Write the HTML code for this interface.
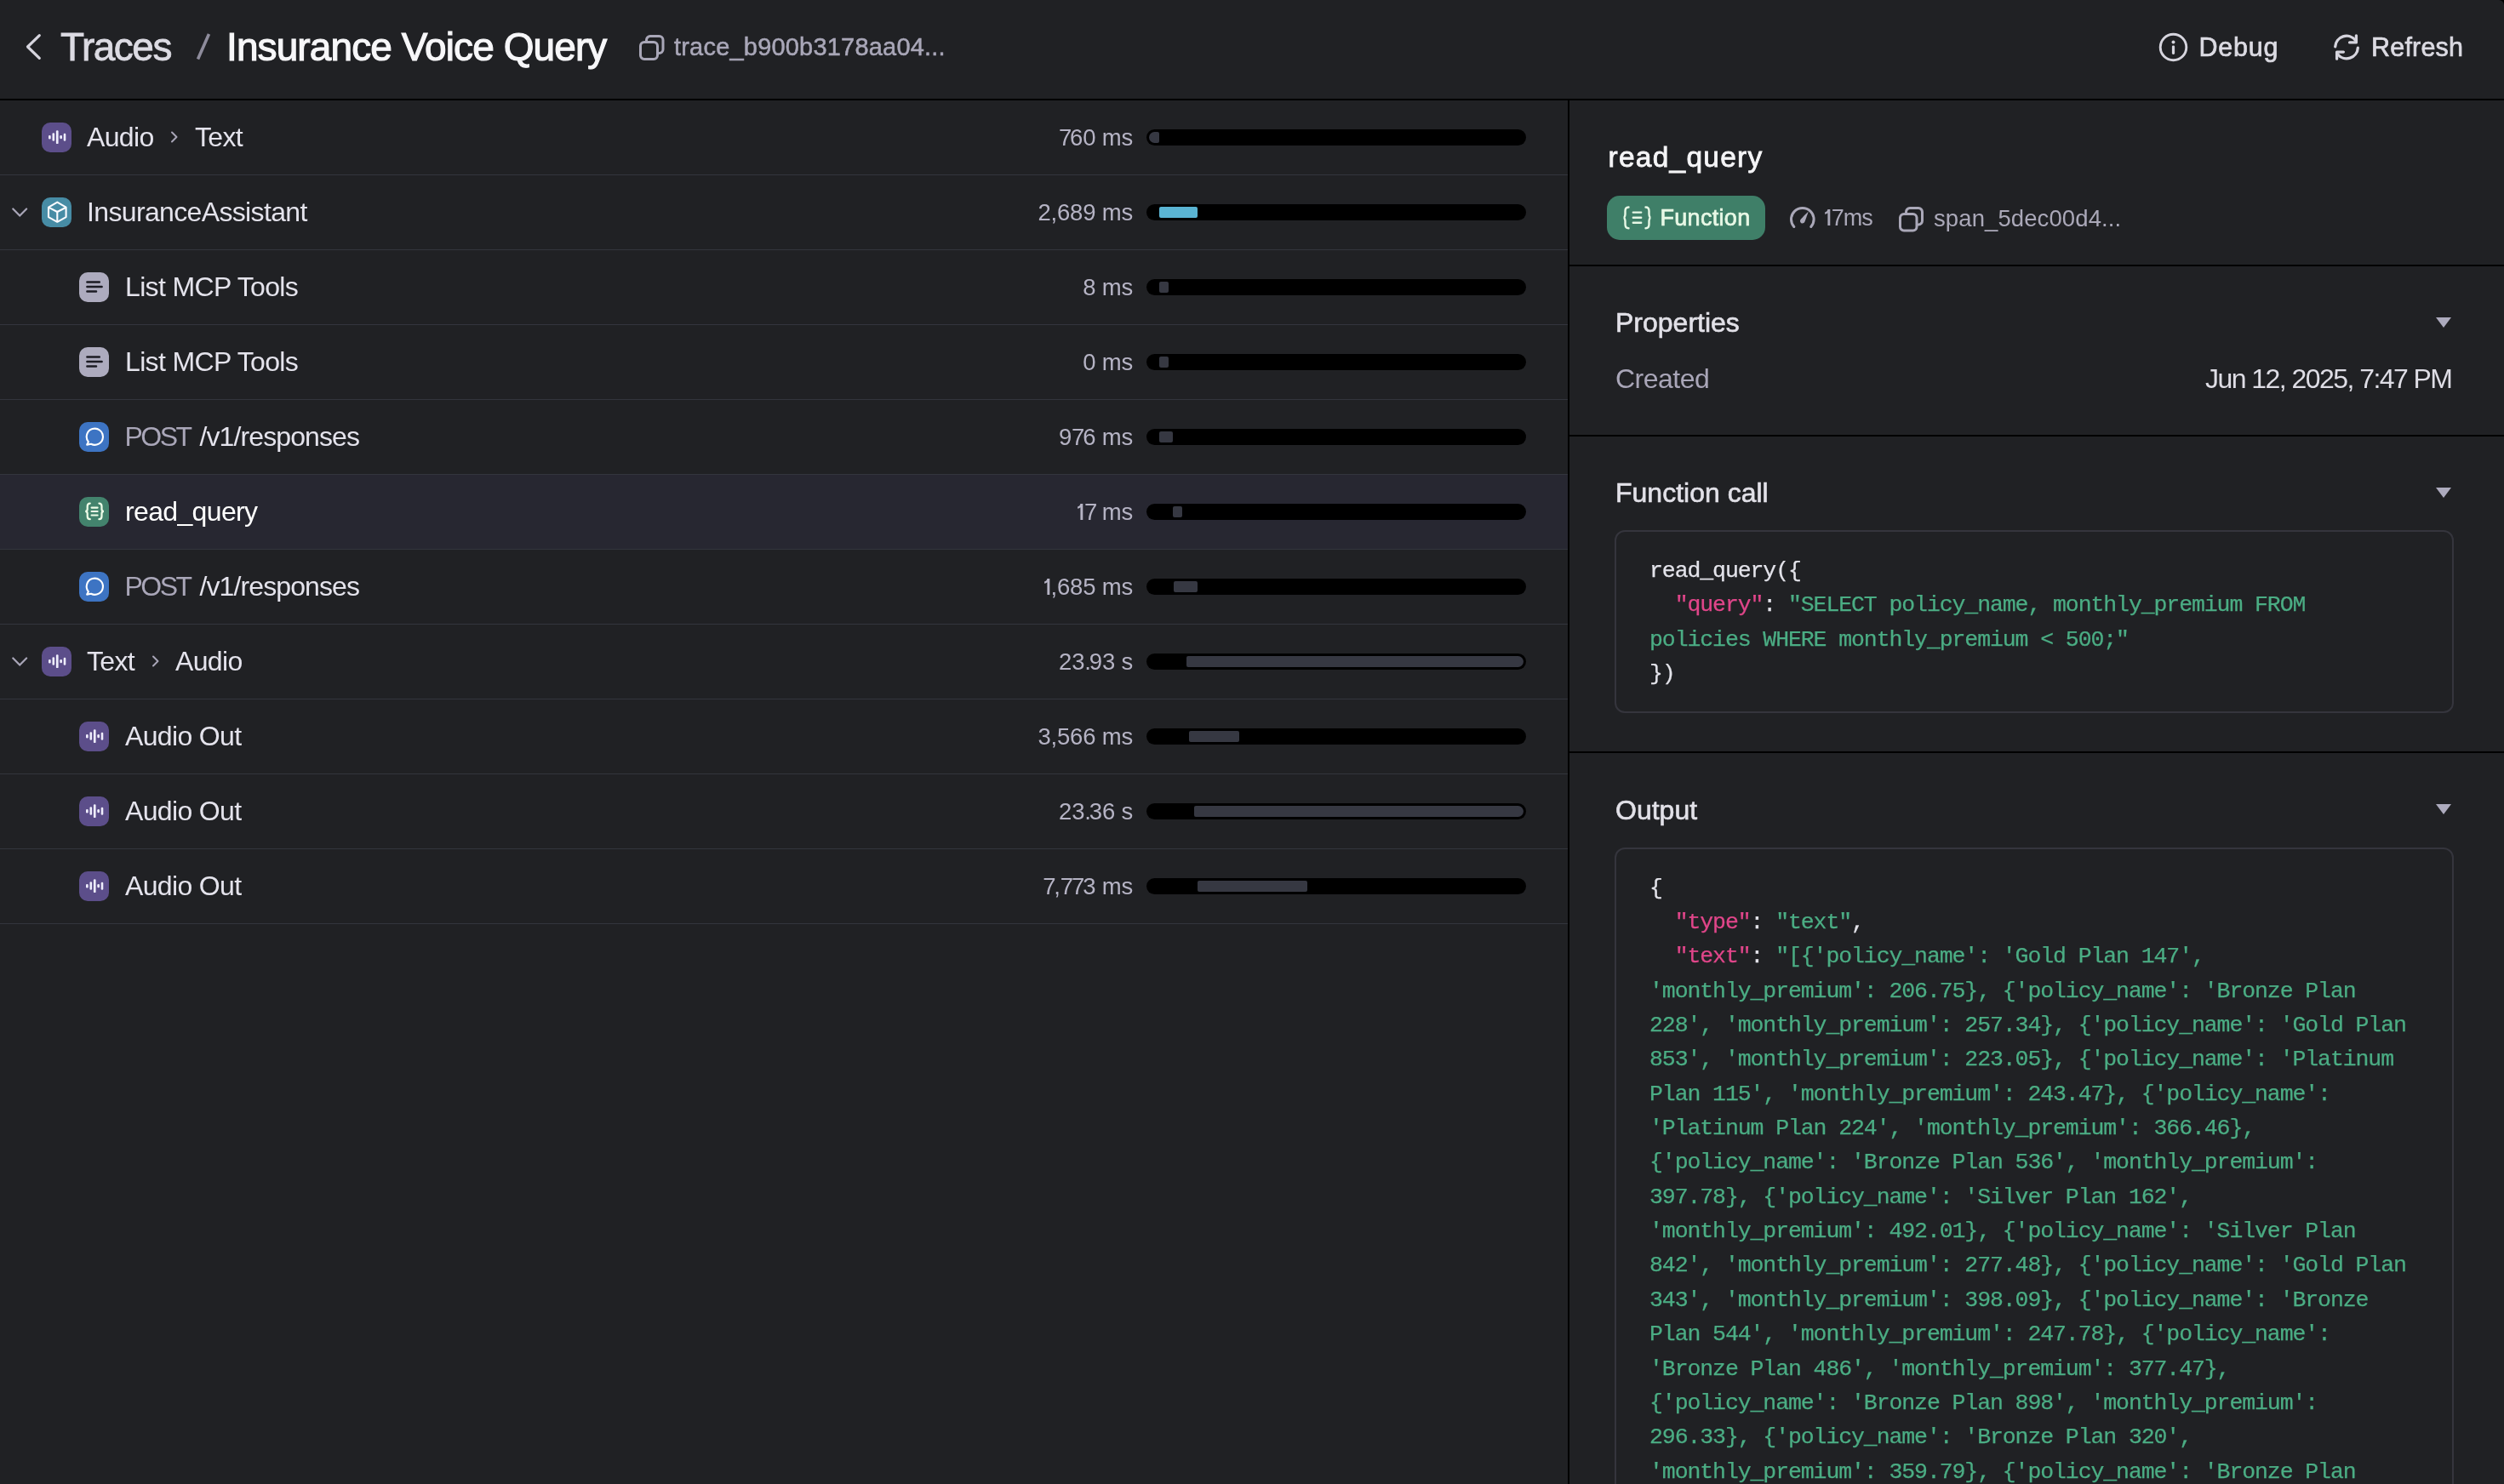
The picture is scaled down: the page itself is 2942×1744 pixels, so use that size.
<!DOCTYPE html>
<html><head><meta charset="utf-8">
<style>
*{box-sizing:border-box}
html,body{margin:0;padding:0}
body{width:2942px;height:1744px;overflow:hidden;will-change:transform;background:#202124;font-family:"Liberation Sans",sans-serif;position:relative;color:#dedde5}
.a{position:absolute}
.t{position:absolute;line-height:1;white-space:pre}
.hdr-line{position:absolute;left:0;top:116px;width:2942px;height:2px;background:#000}
.vline{position:absolute;left:1842px;top:116px;width:2px;height:1628px;background:#000}
.row{position:absolute;left:0;width:1842px;height:88px;border-bottom:1px solid #33353d}
.row.sel{background:#272731}
.row.sel .name{color:#ffffff}
.ico{position:absolute;width:35px;height:35px;border-radius:10px;top:26px}
.ico svg{display:block}
.name{position:absolute;top:27px;line-height:1;white-space:pre;font-size:32px;letter-spacing:-0.65px;color:#e4e3ec}
.dur{position:absolute;right:511px;top:30px;line-height:1;white-space:pre;font-size:27.5px;letter-spacing:-0.2px;color:#b5b3c4;text-align:right}
.one{display:inline-block;vertical-align:baseline;margin-right:-0.2px}
.n7{letter-spacing:-2.1px}
.bar{position:absolute;left:1347px;top:34px;width:446px;height:19px;border-radius:10px;background:#000}
.track{position:absolute;left:3px;top:3px;width:440px;height:13px;border-radius:6.5px;overflow:hidden}
.seg{position:absolute;top:0;height:13px;background:#363842;border-radius:2px}
.chev{position:absolute;left:14px;top:38px}
.code{position:absolute;white-space:pre;font-family:"Liberation Mono",monospace;font-size:26.5px;letter-spacing:-1.09px;line-height:40.35px;color:#e3e3ea;-webkit-text-stroke:0.25px currentColor}
.k{color:#e0468a}
.s{color:#4bad84}
.box{position:absolute;left:1897px;width:986px;border:2px solid #35353d;border-radius:12px}
.rdiv{position:absolute;left:1844px;width:1098px;height:2px;background:#000}
.sec{position:absolute;left:1898px;top:0;line-height:1;white-space:pre;font-size:32px;color:#e2e1e8;-webkit-text-stroke:0.6px #e2e1e8}
.tri{position:absolute;left:2862px;width:0;height:0;border-left:9px solid transparent;border-right:9px solid transparent;border-top:12px solid #adabbe}
</style></head>
<body>
<svg class="a" style="left:28px;top:38px" width="24" height="34" viewBox="0 0 24 34"><path d="M18.3 3.6 L4.5 17 L18.3 30.4" fill="none" stroke="#d6d5de" stroke-width="3.2" stroke-linecap="round" stroke-linejoin="round"/></svg>
<div class="t" style="left:71px;top:32px;font-size:46px;letter-spacing:-1.5px;color:#dcdbe3;-webkit-text-stroke:0.8px #dcdbe3">Traces</div>
<svg class="a" style="left:226px;top:36px" width="26" height="38" viewBox="0 0 26 38"><path d="M6.5 33.5 L19.5 4" fill="none" stroke="#8e8c9c" stroke-width="3.6"/></svg>
<div class="t" style="left:266px;top:32px;font-size:46px;letter-spacing:-0.9px;color:#f7f7f9;-webkit-text-stroke:1.15px #f7f7f9">Insurance Voice Query</div>
<svg class="a" style="left:749px;top:39px" width="34" height="34" viewBox="0 0 34 34"><rect x="3.5" y="10.5" width="20" height="20" rx="4.5" fill="none" stroke="#a9a7b8" stroke-width="3"/><path d="M10.5 9 V8 a4.5 4.5 0 0 1 4.5 -4.5 H25.5 a4.5 4.5 0 0 1 4.5 4.5 V19 a4.5 4.5 0 0 1 -4.5 4.5 H24" fill="none" stroke="#a9a7b8" stroke-width="3"/></svg>
<div class="t" style="left:792px;top:40.5px;font-size:29px;letter-spacing:0.2px;color:#a9a7b8;-webkit-text-stroke:0.5px #a9a7b8">trace_b900b3178aa04...</div>

<svg class="a" style="left:2535px;top:37px" width="37" height="37" viewBox="0 0 37 37"><circle cx="18.5" cy="18.5" r="15.3" fill="none" stroke="#d6d5de" stroke-width="2.9"/><circle cx="18.5" cy="12.4" r="2" fill="#d6d5de"/><rect x="16.9" y="16.4" width="3.2" height="10.6" rx="1.4" fill="#d6d5de"/></svg>
<div class="t" style="left:2583.5px;top:40.4px;font-size:30.5px;letter-spacing:0.8px;color:#dcdbe3;-webkit-text-stroke:0.7px #dcdbe3">Debug</div>
<svg class="a" style="left:2740px;top:39px" width="34" height="34" viewBox="0 0 34 34" fill="none" stroke="#d6d5de" stroke-width="3.3" stroke-linecap="round" stroke-linejoin="round"><path d="M3.7 15.9 A13.3 13.3 0 0 1 27.4 8.2"/><path d="M28.4 2.8 V10.9 H20.6"/><path d="M30.3 17.1 A13.3 13.3 0 0 1 6.6 24.8"/><path d="M5.6 30.2 V22.1 H13.4"/></svg>
<div class="t" style="left:2786px;top:40.4px;font-size:30.5px;letter-spacing:0.2px;color:#dcdbe3;-webkit-text-stroke:0.7px #dcdbe3">Refresh</div>

<div class="hdr-line"></div>
<svg class="a" style="right:0;top:0" width="6" height="6" viewBox="0 0 6 6"><path d="M0 0 H6 V6 A6 6 0 0 0 0 0 Z" fill="#000"/></svg>
<div class="vline"></div>
<div id="rows"><div class="row" style="top:118px"><div class="ico" style="left:49px;background:#5c4e8a"><svg width="35" height="35" viewBox="0 0 35 35" fill="#eeedfc"><rect x="8" y="14.9" width="2.7" height="4.6" rx="1.2"/><rect x="12.5" y="12.3" width="2.6" height="9.4" rx="1.2"/><rect x="16.9" y="9.3" width="2.7" height="15.8" rx="1.2"/><rect x="21.3" y="15" width="2.7" height="4.2" rx="1.2"/><rect x="25.7" y="12.8" width="2.6" height="8.9" rx="1.2"/></svg></div><div class="name" style="left:102px">Audio</div><svg class="a" style="left:200px;top:36px" width="10" height="14" viewBox="0 0 10 14"><path d="M2 1.5 L7.5 7 L2 12.5" fill="none" stroke="#a9a6b8" stroke-width="2" stroke-linecap="round" stroke-linejoin="round"/></svg><div class="name" style="left:229px">Text</div><div class="dur"><span class="n7">7</span>60 ms</div><div class="bar"><div class="track"><div class="seg" style="left:0px;width:12px;background:#363842"></div></div></div></div>
<div class="row" style="top:206px"><svg class="chev" width="19" height="12" viewBox="0 0 19 12"><path d="M1.3 1.5 L9.2 9.6 L17.1 1.5" fill="none" stroke="#a9a6b8" stroke-width="2.2" stroke-linecap="round" stroke-linejoin="round"/></svg><div class="ico" style="left:49px;background:#478ca5"><svg width="35" height="35" viewBox="0 0 35 35" fill="none" stroke="#fbfbff" stroke-width="2.1" stroke-linejoin="round"><path d="M18.3 5.6 L28.6 11.7 V23.1 L18.3 28.8 L8 23.1 V11.6 Z"/><path d="M8 11.6 L18.3 17 L28.6 11.7 M18.3 17 V28.8"/></svg></div><div class="name" style="left:102px">InsuranceAssistant</div><div class="dur">2,689 ms</div><div class="bar"><div class="track"><div class="seg" style="left:11.5px;width:45.5px;background:#5ab4d3"></div></div></div></div>
<div class="row" style="top:294px"><div class="ico" style="left:93px;background:#adabbe"><svg width="35" height="35" viewBox="0 0 35 35" fill="none" stroke="#1c1c24" stroke-width="2.5" stroke-linecap="round"><path d="M9.4 11.5 H23.8 M9.4 17.1 H26.6 M9.4 22.5 H20"/></svg></div><div class="name" style="left:147px">List MCP Tools</div><div class="dur">8 ms</div><div class="bar"><div class="track"><div class="seg" style="left:11.5px;width:11.5px;background:#363842"></div></div></div></div>
<div class="row" style="top:382px"><div class="ico" style="left:93px;background:#adabbe"><svg width="35" height="35" viewBox="0 0 35 35" fill="none" stroke="#1c1c24" stroke-width="2.5" stroke-linecap="round"><path d="M9.4 11.5 H23.8 M9.4 17.1 H26.6 M9.4 22.5 H20"/></svg></div><div class="name" style="left:147px">List MCP Tools</div><div class="dur">0 ms</div><div class="bar"><div class="track"><div class="seg" style="left:11.5px;width:11.5px;background:#363842"></div></div></div></div>
<div class="row" style="top:470px"><div class="ico" style="left:93px;background:#3d74c3"><svg width="35" height="35" viewBox="0 0 35 35" fill="none" stroke="#ffffff" stroke-width="2.1" stroke-linejoin="round"><path d="M10.9 23.3 A9.6 9.6 0 1 1 14 25.8 L9.2 26.6 Z"/></svg></div><div class="name" style="left:146.5px;letter-spacing:-2.5px;color:#a9a6b8">POST</div><div class="name" style="left:234.5px;letter-spacing:-0.9px">/v1/responses</div><div class="dur">9<span class="n7">7</span>6 ms</div><div class="bar"><div class="track"><div class="seg" style="left:11.5px;width:16.5px;background:#363842"></div></div></div></div>
<div class="row sel" style="top:558px"><div class="ico" style="left:93px;background:#43836d"><svg width="35" height="35" viewBox="0 0 35 35" fill="none" stroke="#eefde8" stroke-width="2.2" stroke-linecap="round"><path d="M12.8 7.6 C10.5 7.6 9.7 8.8 9.7 11 V14.2 C9.7 15.9 8.9 16.9 7.2 16.9 C8.9 16.9 9.7 17.9 9.7 19.6 V22.8 C9.7 25 10.5 26.2 12.8 26.2"/><path d="M23.4 7.6 C25.7 7.6 26.5 8.8 26.5 11 V14.2 C26.5 15.9 27.3 16.9 29 16.9 C27.3 16.9 26.5 17.9 26.5 19.6 V22.8 C26.5 25 25.7 26.2 23.4 26.2"/><path d="M14.6 12.6 H21.6 M14.6 17 H21.6 M14.6 21.5 H21.6"/></svg></div><div class="name" style="left:147px">read_query</div><div class="dur"><svg class="one" width="7.8" height="19" viewBox="0 0 7.8 19"><path d="M3.4 0 H6.3 V19 H3.4 V4.3 C2.6 5.2 1.4 5.6 0.1 5.7 V3.4 C1.6 3.2 2.9 2.2 3.4 0 Z" fill="currentColor"/></svg><span class="n7">7</span> ms</div><div class="bar"><div class="track"><div class="seg" style="left:28px;width:11px;background:#363842"></div></div></div></div>
<div class="row" style="top:646px"><div class="ico" style="left:93px;background:#3d74c3"><svg width="35" height="35" viewBox="0 0 35 35" fill="none" stroke="#ffffff" stroke-width="2.1" stroke-linejoin="round"><path d="M10.9 23.3 A9.6 9.6 0 1 1 14 25.8 L9.2 26.6 Z"/></svg></div><div class="name" style="left:146.5px;letter-spacing:-2.5px;color:#a9a6b8">POST</div><div class="name" style="left:234.5px;letter-spacing:-0.9px">/v1/responses</div><div class="dur"><svg class="one" width="7.8" height="19" viewBox="0 0 7.8 19"><path d="M3.4 0 H6.3 V19 H3.4 V4.3 C2.6 5.2 1.4 5.6 0.1 5.7 V3.4 C1.6 3.2 2.9 2.2 3.4 0 Z" fill="currentColor"/></svg>,685 ms</div><div class="bar"><div class="track"><div class="seg" style="left:28.5px;width:28.5px;background:#363842"></div></div></div></div>
<div class="row" style="top:734px"><svg class="chev" width="19" height="12" viewBox="0 0 19 12"><path d="M1.3 1.5 L9.2 9.6 L17.1 1.5" fill="none" stroke="#a9a6b8" stroke-width="2.2" stroke-linecap="round" stroke-linejoin="round"/></svg><div class="ico" style="left:49px;background:#5c4e8a"><svg width="35" height="35" viewBox="0 0 35 35" fill="#eeedfc"><rect x="8" y="14.9" width="2.7" height="4.6" rx="1.2"/><rect x="12.5" y="12.3" width="2.6" height="9.4" rx="1.2"/><rect x="16.9" y="9.3" width="2.7" height="15.8" rx="1.2"/><rect x="21.3" y="15" width="2.7" height="4.2" rx="1.2"/><rect x="25.7" y="12.8" width="2.6" height="8.9" rx="1.2"/></svg></div><div class="name" style="left:102px">Text</div><svg class="a" style="left:178px;top:36px" width="10" height="14" viewBox="0 0 10 14"><path d="M2 1.5 L7.5 7 L2 12.5" fill="none" stroke="#a9a6b8" stroke-width="2" stroke-linecap="round" stroke-linejoin="round"/></svg><div class="name" style="left:206px">Audio</div><div class="dur">23<span class="n7">.</span>93 s</div><div class="bar"><div class="track"><div class="seg" style="left:44px;width:396px;background:#363842"></div></div></div></div>
<div class="row" style="top:822px"><div class="ico" style="left:93px;background:#5c4e8a"><svg width="35" height="35" viewBox="0 0 35 35" fill="#eeedfc"><rect x="8" y="14.9" width="2.7" height="4.6" rx="1.2"/><rect x="12.5" y="12.3" width="2.6" height="9.4" rx="1.2"/><rect x="16.9" y="9.3" width="2.7" height="15.8" rx="1.2"/><rect x="21.3" y="15" width="2.7" height="4.2" rx="1.2"/><rect x="25.7" y="12.8" width="2.6" height="8.9" rx="1.2"/></svg></div><div class="name" style="left:147px">Audio Out</div><div class="dur">3,566 ms</div><div class="bar"><div class="track"><div class="seg" style="left:47px;width:59px;background:#363842"></div></div></div></div>
<div class="row" style="top:910px"><div class="ico" style="left:93px;background:#5c4e8a"><svg width="35" height="35" viewBox="0 0 35 35" fill="#eeedfc"><rect x="8" y="14.9" width="2.7" height="4.6" rx="1.2"/><rect x="12.5" y="12.3" width="2.6" height="9.4" rx="1.2"/><rect x="16.9" y="9.3" width="2.7" height="15.8" rx="1.2"/><rect x="21.3" y="15" width="2.7" height="4.2" rx="1.2"/><rect x="25.7" y="12.8" width="2.6" height="8.9" rx="1.2"/></svg></div><div class="name" style="left:147px">Audio Out</div><div class="dur">23<span class="n7">.</span>36 s</div><div class="bar"><div class="track"><div class="seg" style="left:53.4px;width:386.6px;background:#363842"></div></div></div></div>
<div class="row" style="top:998px"><div class="ico" style="left:93px;background:#5c4e8a"><svg width="35" height="35" viewBox="0 0 35 35" fill="#eeedfc"><rect x="8" y="14.9" width="2.7" height="4.6" rx="1.2"/><rect x="12.5" y="12.3" width="2.6" height="9.4" rx="1.2"/><rect x="16.9" y="9.3" width="2.7" height="15.8" rx="1.2"/><rect x="21.3" y="15" width="2.7" height="4.2" rx="1.2"/><rect x="25.7" y="12.8" width="2.6" height="8.9" rx="1.2"/></svg></div><div class="name" style="left:147px">Audio Out</div><div class="dur"><span class="n7">7</span>,<span class="n7">7</span><span class="n7">7</span>3 ms</div><div class="bar"><div class="track"><div class="seg" style="left:57px;width:128.6px;background:#363842"></div></div></div></div></div>

<div class="t" style="left:1889.5px;top:168px;font-size:33.5px;letter-spacing:1.25px;color:#f5f5f7;-webkit-text-stroke:0.8px #f5f5f7">read_query</div>
<div class="a" style="left:1888px;top:230px;width:186px;height:52px;border-radius:15px;background:#3f7f68"></div>
<svg class="a" style="left:1904px;top:240px" width="40" height="32" viewBox="0 0 40 32" fill="none" stroke="#e8f8e6" stroke-width="2.4" stroke-linecap="round"><path d="M9.5 3.5 C6.3 3.5 5.5 5.3 5.5 8 V11.5 C5.5 13.6 4.6 15.8 3.5 15.8 C4.6 15.8 5.5 18 5.5 20.1 V23.6 C5.5 26.3 6.3 28.3 9.5 28.3"/><path d="M29.5 3.5 C32.7 3.5 33.5 5.3 33.5 8 V11.5 C33.5 13.6 34.4 15.8 35.5 15.8 C34.4 15.8 33.5 18 33.5 20.1 V23.6 C33.5 26.3 32.7 28.3 29.5 28.3"/><path d="M14.8 9.6 H24.2 M14.8 15.7 H24.2 M14.8 21.7 H24.2"/></svg>
<div class="t" style="left:1950.5px;top:242.5px;font-size:27px;letter-spacing:0.3px;color:#e8f8e6;-webkit-text-stroke:0.7px #e8f8e6">Function</div>
<svg class="a" style="left:2100px;top:240px" width="36" height="30" viewBox="0 0 36 30"><path d="M7.8 26.5 A13.3 13.3 0 1 1 27.8 26.5" fill="none" stroke="#aaa8b8" stroke-width="3" stroke-linecap="round"/><path d="M24.8 8.6 C23.8 11.5 22 16.5 20.6 20.3 C19.7 22.8 16.6 23.3 15.4 21.3 C14.5 19.7 15.2 18.3 16.6 16.8 C19 14.2 22.3 11 24.8 8.6 Z" fill="#aaa8b8"/></svg>
<div class="t" style="left:2144.2px;top:243px;font-size:27px;letter-spacing:-1px;color:#aaa8b8"><svg class="one" width="7.8" height="19" viewBox="0 0 7.8 19"><path d="M3.4 0 H6.3 V19 H3.4 V4.3 C2.6 5.2 1.4 5.6 0.1 5.7 V3.4 C1.6 3.2 2.9 2.2 3.4 0 Z" fill="currentColor"/></svg>7ms</div>
<svg class="a" style="left:2229px;top:241px" width="34" height="34" viewBox="0 0 34 34"><rect x="3.5" y="10.5" width="19.5" height="19.5" rx="4.5" fill="none" stroke="#aaa8b8" stroke-width="3"/><path d="M10.5 9 V8 a4.5 4.5 0 0 1 4.5 -4.5 H25 a4.5 4.5 0 0 1 4.5 4.5 V18.5 a4.5 4.5 0 0 1 -4.5 4.5 H24" fill="none" stroke="#aaa8b8" stroke-width="3"/></svg>
<div class="t" style="left:2272px;top:243px;font-size:27.5px;letter-spacing:0.1px;color:#aaa8b8">span_5dec00d4...</div>
<div class="rdiv" style="top:311px"></div>

<div class="sec" style="top:363px">Properties</div>
<div class="tri" style="top:373px"></div>
<div class="t" style="left:1898px;top:429px;font-size:32px;letter-spacing:-0.5px;color:#a9a6b8">Created</div>
<div class="t" style="left:2591px;top:429px;font-size:32px;letter-spacing:-1.55px;color:#dedde5">Jun 12, 2025, 7:47 PM</div>
<div class="rdiv" style="top:511px"></div>

<div class="sec" style="top:563px">Function call</div>
<div class="tri" style="top:573px"></div>
<div class="box" style="top:623px;height:215px"></div>
<div class="code" style="left:1938px;top:651px">read_query({
  <span class="k">"query"</span>: <span class="s">"SELECT policy_name, monthly_premium FROM
policies WHERE monthly_premium &lt; 500;"</span>
})</div>
<div class="rdiv" style="top:883px"></div>

<div class="sec" style="top:936px">Output</div>
<div class="tri" style="top:945px"></div>
<div class="box" style="top:996px;height:800px"></div>
<div class="code" style="left:1938px;top:1023.7px">{
  <span class="k">"type"</span>: <span class="s">"text"</span>,
  <span class="k">"text"</span>: <span class="s">"[{'policy_name': 'Gold Plan 147',
'monthly_premium': 206.75}, {'policy_name': 'Bronze Plan
228', 'monthly_premium': 257.34}, {'policy_name': 'Gold Plan
853', 'monthly_premium': 223.05}, {'policy_name': 'Platinum
Plan 115', 'monthly_premium': 243.47}, {'policy_name':
'Platinum Plan 224', 'monthly_premium': 366.46},
{'policy_name': 'Bronze Plan 536', 'monthly_premium':
397.78}, {'policy_name': 'Silver Plan 162',
'monthly_premium': 492.01}, {'policy_name': 'Silver Plan
842', 'monthly_premium': 277.48}, {'policy_name': 'Gold Plan
343', 'monthly_premium': 398.09}, {'policy_name': 'Bronze
Plan 544', 'monthly_premium': 247.78}, {'policy_name':
'Bronze Plan 486', 'monthly_premium': 377.47},
{'policy_name': 'Bronze Plan 898', 'monthly_premium':
296.33}, {'policy_name': 'Bronze Plan 320',
'monthly_premium': 359.79}, {'policy_name': 'Bronze Plan</span></div>
</body></html>
